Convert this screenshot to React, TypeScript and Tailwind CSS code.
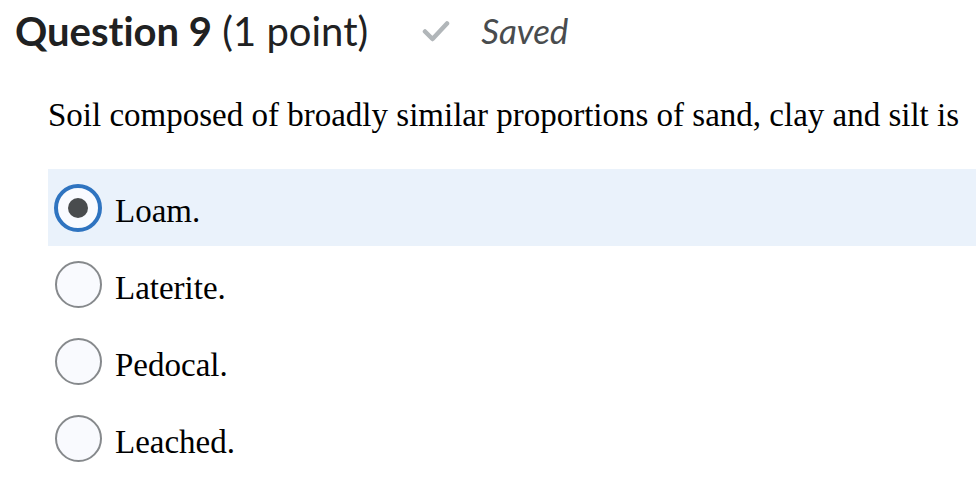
import React from "react";

const options = ["Loam.", "Laterite.", "Pedocal.", "Leached."];

export default function App() {
  return (
    <div className="w-[976px] h-[482px] bg-white overflow-hidden">
      <div className="flex items-center pl-[15px] pt-[7px] h-[54px] [font-variant-ligatures:none]">
        <h2 className="text-[40px] leading-none text-[#202122]" style={{ fontFamily: "Lato, sans-serif" }}>
          <span className="font-bold">Question 9</span>
          <span className="font-normal"> (1 point)</span>
        </h2>
        <svg className="ml-[54px]" width="28" height="22" viewBox="0 0 28 22">
          <path d="M3 11.5 L10.5 19 L25 3.5" fill="none" stroke="#b1b6b9" strokeWidth="4.5" strokeLinecap="round" strokeLinejoin="round" />
        </svg>
        <span className="ml-[31px] italic text-[35px] leading-none text-[#494c4e]" style={{ fontFamily: "Lato, sans-serif" }}>
          Saved
        </span>
      </div>
      <div className="pl-[48px]">
        <p className="mt-[41px] text-[33px] leading-[40px] text-black" style={{ fontFamily: "'Liberation Serif', serif" }}>
          Soil composed of broadly similar proportions of sand, clay and silt is
        </p>
        <div className="mt-[34px] flex flex-col">
          {options.map((o, i) => (
            <div key={o} className={`flex items-center h-[77px] ${i === 0 ? "bg-[#eaf2fb]" : ""}`}>
              {i === 0 ? (
                <div className="ml-[6px] w-[48px] h-[48px] rounded-full border-[4px] border-[#2f74c0] bg-[#f9fbff] flex items-center justify-center">
                  <div className="w-[20px] h-[20px] rounded-full bg-[#494c4e]" />
                </div>
              ) : (
                <div className="ml-[7px] w-[47px] h-[47px] rounded-full border-[2px] border-[#86898c] bg-[#f9fafe]" />
              )}
              <span className="ml-[13px] mt-[8px] text-[33px] leading-none text-black" style={{ fontFamily: "'Liberation Serif', serif" }}>
                {o}
              </span>
            </div>
          ))}
        </div>
      </div>
    </div>
  );
}
